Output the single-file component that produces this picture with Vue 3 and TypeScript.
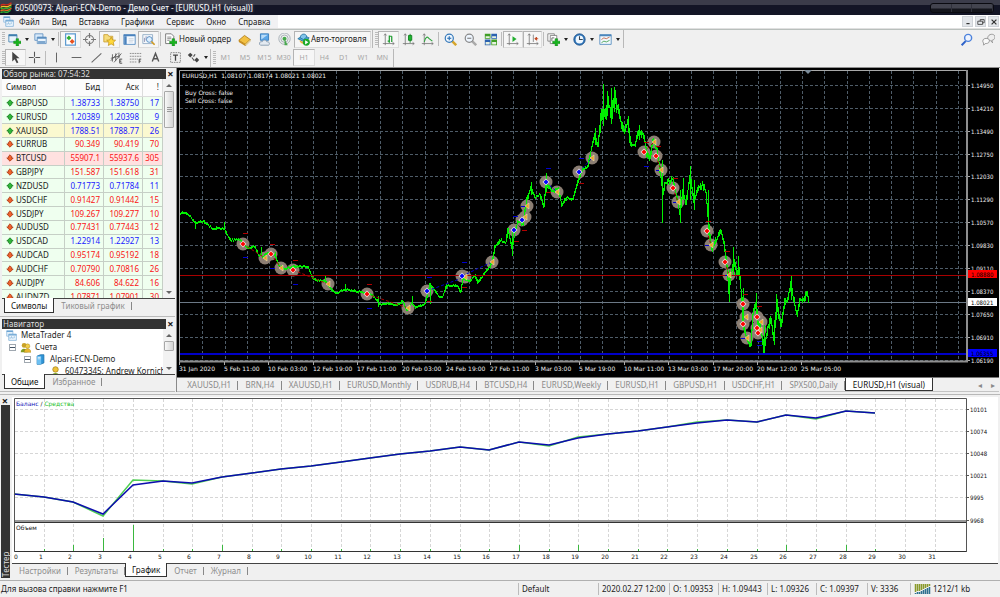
<script setup lang="ts">
import { ref } from 'vue'

interface Tool { icon: string; label: string; on?: boolean; menu?: boolean }
interface Quote { name: string; bid: string; ask: string; spread: number; up: boolean; tone?: string }
type Point = [number, number]
type Deal = [number, number, 'sell' | 'buy' | 'close']

const menus = ['Файл', 'Вид', 'Вставка', 'Графики', 'Сервис', 'Окно', 'Справка']

const axes = '<path d="M4 1v14M1 13h14M2.500 3 4 1l1.500 2M13 11.500l2 1.500-2 1.500" stroke="#777" fill="none"/>'
const plus = '<path d="M10 7h3v3h3v3h-3v3h-3v-3H7v-3h3z" fill="#17b51c" stroke="#0b7d10" stroke-width=".6"/>'
const lens = (c: string) => `<path d="m10 10 5 5" stroke="${c === '#888' ? '#aaa' : '#d5a52c'}" stroke-width="3"/><circle cx="6.500" cy="6.500" r="5" fill="#eef6ff" stroke="${c}" stroke-width="1.500"/><path d="M4 6.500h5" stroke="${c}" stroke-width="1.500"/>`

const icons: Record<string, string> = {
  newChart: '<path d="M1 2h10v9H1z" fill="#e8f3fb" stroke="#3f7fae"/><path d="M1 3h10" stroke="#3f7fae" stroke-width="2"/>' + plus,
  profiles: '<path d="M1 1h10v8H1z" fill="#d8eafa" stroke="#5c8fc0"/><path d="M4 5h11v8H4z" fill="#eaf4fd" stroke="#5c8fc0"/><path d="M4 6h11M5 11h9" stroke="#5c8fc0" stroke-width="2"/>',
  market: '<path d="M2 1h12v14H2z" fill="#fff" stroke="#5d9bd1" stroke-width="1.500"/><path d="M6 3l3 3-3 3-3-3z" fill="#2fae33"/><path d="M10 7.500l3 3-3 3-3-3z" fill="#e8501c"/>',
  dataWindow: '<circle cx="8" cy="8" r="5" fill="none" stroke="#777" stroke-width="1.300"/><path d="M8 0v6M8 10v6M0 8h6M10 8h6" stroke="#777" stroke-width="1.500"/>',
  navigator: '<path d="M1 2h5l1 2h5v7H1z" fill="#f6dc7b" stroke="#c79a2a"/><path d="m10 5 1.700 3.500 3.800.4-2.800 2.600.8 3.900-3.500-2-3.500 2 .8-3.900L4.500 8.900l3.800-.4z" fill="#ffd83a" stroke="#b98a10" stroke-width=".8"/>',
  terminal: '<path d="M1 2h14v12H1z" fill="#f4f9ff" stroke="#4a82bd"/><path d="M1 3h14" stroke="#4a82bd" stroke-width="2"/><path d="M3 4v10" stroke="#4a82bd" stroke-width="3"/><path d="M7 7h6M7 9h6M7 11h5" stroke="#c5cfda"/>',
  tester: '<path d="M1 2h12v11H1z" fill="#f4f8fc" stroke="#8aa6c2"/><path d="M3 11V6M5 9V4M7 10V5M9 8V4" stroke="#88a"/><circle cx="9" cy="8" r="3.500" fill="#dff0ff" stroke="#4b84bd"/><path d="m11.500 10.500 4 4" stroke="#cf9b24" stroke-width="2"/>',
  order: '<path d="M2 1h7l3 3v9H2z" fill="#fff" stroke="#666"/><path d="M4 5h5M4 7h5M4 9h3" stroke="#777"/>' + plus,
  book: '<path d="m1 9 7-6 7 5-6 6z" fill="#f3c142" stroke="#a97614"/><path d="m1 9 8 5v2l-8-5z" fill="#c98d1c"/><path d="m9 14 6-6v2l-6 6z" fill="#fff2c4" stroke="#a97614" stroke-width=".5"/>',
  vps: '<path d="M3 1h10v8H3z" fill="#5aa6e8" stroke="#2f75b5"/><path d="M4 2h8l-8 6z" fill="#b9dcf8"/><path d="M2 14c-1-3 2-4 3-3 1-3 5-3 6 0 3-1 4 3 2 4H3z" fill="#e4eaf1" stroke="#7d92a9"/>',
  signal: '<g fill="none" stroke="#9aa5ad"><circle cx="8" cy="7" r="7"/><circle cx="8" cy="7" r="4.500"/></g><circle cx="8" cy="7" r="2.500" fill="#45a84a"/><path d="m8 7 4 8H8z" fill="#49a84e"/>',
  expert: '<path d="M1 7 8 3l7 3-6 5z" fill="#50a8dc" stroke="#23719f"/><path d="M4 6c0-6 8-6 8-1L8 8z" fill="#80c4ea" stroke="#23719f"/><path d="M3 9c1 6 9 5 9 0L8 11z" fill="#e6b33e"/><circle cx="11.500" cy="11.500" r="4.300" fill="#1aaa28"/><path d="m10 9 4 2.500-4 2.500z" fill="#fff"/>',
  bars: axes + '<path d="M9 3v9M7 10h2M9 4h3M12 4v7" stroke="#1b9a2c" stroke-width="1.500" fill="none"/>',
  candles: axes + '<path d="M10 1v11" stroke="#087b18"/><path d="M8 3h4v6H8z" fill="#1fb52f" stroke="#087b18"/>',
  line: axes + '<path d="M4 11c2-7 4-7 6-4l4 3" stroke="#2ba33a" stroke-width="1.300" fill="none"/>',
  zoomIn: lens('#3478b8') + '<path d="M6.500 4v5" stroke="#3478b8" stroke-width="1.500"/>',
  zoomOut: lens('#888'),
  tiles: '<path d="M1 1h7v6H1zM9 8h7v7H9z" fill="#3f9e25"/><path d="M9 1h7v6H9zM1 8h7v7H1z" fill="#2b62b0"/><path d="M2 4h5v2H2zM10 4h5v2h-5zM2 11h5v3H2zM10 11h5v3h-5z" fill="#e7f1e0"/>',
  scroll: axes + '<path d="m8 4 5 3.500L8 11z" fill="#21ad2e"/>',
  shift: axes + '<path d="M9 2v9" stroke="#777"/><path d="M11 7h4M11 7l2-2v4z" stroke="#c3421b" fill="#c3421b"/>',
  indicators: '<path d="M1 1h8v9H1z" fill="#fff" stroke="#777"/><path d="M4 3h8v10H4z" fill="#fff" stroke="#777"/><path d="M6 10V6h3" stroke="#555" fill="none"/>' + plus,
  clock: '<circle cx="8" cy="8" r="7" fill="#2e76bb" stroke="#1c4f88"/><circle cx="8" cy="8" r="4.800" fill="#eef7ff"/><path d="M8 4v4h4" stroke="#345" fill="none" stroke-width="1.300"/>',
  template: '<path d="M1 2h14v12H1z" fill="#f2f8fc" stroke="#4c86bc"/><path d="M1 3h14" stroke="#4c86bc" stroke-width="2"/><path d="m3 8 3-2 3 1 4-2" stroke="#c05a3c" fill="none"/><path d="m3 12 3-2 3 1 4-2" stroke="#379a45" fill="none"/>',
  cursor: '<path d="M4 1v12l3-3 2.500 5 2-1L9 9h4z" fill="#444"/>',
  cross: '<path d="M8 1v6M8 9v6M1 8h6M9 8h6" stroke="#555" stroke-width="1.300"/>',
  vline: '<path d="M8 2v12" stroke="#666" stroke-width="1.300"/>',
  hline: '<path d="M2 8h12" stroke="#666" stroke-width="1.300"/>',
  trend: '<path d="M2 14 14 3" stroke="#666" stroke-width="1.300"/>',
  channel: '<path d="m1 12 8-9M5 14l9-11M3 4v9M7 3v9M11 2v7M1 9l11-3" stroke="#555" fill="none"/><path d="M15 10h-3v5h3M12 12.500h2" stroke="#333" fill="none"/>',
  fibo: '<path d="M1 3h14M1 6.500h14M1 10h10M1 13.500h9" stroke="#777" stroke-dasharray="2 1"/><path d="M15 10h-2.500v5M12.500 12.500h2" stroke="#333" fill="none"/>',
  letter: '<path d="m4 13 4-10 4 10M5.500 9.500h5" stroke="#555" stroke-width="1.700" fill="none"/>',
  label: '<path d="M2 2h12v12H2z" fill="none" stroke="#777" stroke-dasharray="2 1"/><path d="M5 5h6M8 5v7" stroke="#444" stroke-width="1.600"/>',
  arrows: '<path d="m1 5 3-3 3 3-3 3z" fill="#444"/><path d="m9 11 3-3 3 3-3 3z" fill="#444"/><path d="m6 8 3 4M10 4l-2 3" stroke="#555" stroke-width="1.500"/>',
  search: '<path d="m2 15 5-5" stroke="#2d62c9" stroke-width="2.500"/><circle cx="10" cy="6" r="4.300" fill="#eef4ff" stroke="#4e83dc" stroke-width="1.800"/>',
  chat: '<path d="M7 8c-1-8 9-8 9-3 0 3-3 4-4 4l1 3-3-3c-1 0-2 0-3-1z" fill="#eee" stroke="#888"/><path d="M1 10c0-5 9-4 8 0 0 3-4 3-5 3l-2 2v-3c-1 0-1-1-1-2z" fill="#fafafa" stroke="#888"/>',
  app: '<path d="M1 1h9v8H1z" fill="#e6f2fb" stroke="#86b5dc"/><path d="M4 6h11v9H4z" fill="#f4faff" stroke="#6aa3d2"/><path d="M1 2h9M4 7h11" stroke="#6aa3d2" stroke-width="2"/><path d="M6 13v-3M8 12V9M10 13v-3M12 12V9" stroke="#7fb0d8"/>',
  people: '<circle cx="6" cy="5" r="3.500" fill="#c9a227"/><path d="M1 15c0-7 9-7 10 0z" fill="#7f9c20"/><circle cx="11" cy="6" r="3.300" fill="#f2cf4a" stroke="#a07b12" stroke-width=".6"/><path d="M6 15c0-7 10-7 10 0z" fill="#e9b82f" stroke="#a07b12" stroke-width=".6"/>',
  person: '<circle cx="8" cy="5" r="4" fill="#eec23a" stroke="#a07b12"/><path d="M2 16c0-8 12-8 12 0z" fill="#7aa52a"/>',
  server: '<path d="m3 3 5-2h5v12l-5 2H3z" fill="#2f94d6" stroke="#1a6ea8"/><path d="M3 3h6v12H3z" fill="#6dc0f2"/><path d="M4 5h4M4 7h4" stroke="#fff"/>',
}

const standard: Tool[][] = [
  [{ icon: 'newChart', label: 'Новый график', menu: true }, { icon: 'profiles', label: 'Профили', menu: true }],
  [
    { icon: 'market', label: 'Обзор рынка', on: true }, { icon: 'dataWindow', label: 'Окно данных' },
    { icon: 'navigator', label: 'Навигатор', on: true }, { icon: 'terminal', label: 'Терминал' },
    { icon: 'tester', label: 'Тестер стратегий', on: true },
  ],
]
const services: Tool[] = [
  { icon: 'book', label: 'MetaEditor' }, { icon: 'vps', label: 'Хостинг' }, { icon: 'signal', label: 'Сигналы' },
]
const charting: Tool[][] = [
  [{ icon: 'bars', label: 'Бары', on: true }, { icon: 'candles', label: 'Свечи' }, { icon: 'line', label: 'Линия' }],
  [{ icon: 'zoomIn', label: 'Увеличить' }, { icon: 'zoomOut', label: 'Уменьшить' }, { icon: 'tiles', label: 'Окна мозаикой' }],
  [{ icon: 'scroll', label: 'Автопрокрутка', on: true }, { icon: 'shift', label: 'Сдвиг графика', on: true }],
  [
    { icon: 'indicators', label: 'Индикаторы', menu: true }, { icon: 'clock', label: 'Периоды', menu: true },
    { icon: 'template', label: 'Шаблоны', menu: true },
  ],
]
const pointers: Tool[] = [{ icon: 'cursor', label: 'Курсор', on: true }, { icon: 'cross', label: 'Перекрестие' }]
const drawing: Tool[] = [
  { icon: 'vline', label: 'Вертикальная линия' }, { icon: 'hline', label: 'Горизонтальная линия' },
  { icon: 'trend', label: 'Трендовая линия' }, { icon: 'channel', label: 'Канал' }, { icon: 'fibo', label: 'Фибоначчи' },
  { icon: 'letter', label: 'Текст' }, { icon: 'label', label: 'Метка' },
]
const frames = ['M1', 'M5', 'M15', 'M30', 'H1', 'H4', 'D1', 'W1', 'MN']
const frame = ref('H1')

const q = (name: string, bid: string, ask: string, spread: number, up = false, tone = ''): Quote =>
  ({ name, bid, ask, spread, up, tone })
const quotes: Quote[] = [
  q('GBPUSD', '1.38733', '1.38750', 17, true), q('EURUSD', '1.20389', '1.20398', 9, true),
  q('XAUUSD', '1788.51', '1788.77', 26, true, 'yellow'), q('EURRUB', '90.349', '90.419', 70),
  q('BTCUSD', '55907.1', '55937.6', 305, false, 'pink'), q('GBPJPY', '151.587', '151.618', 31),
  q('NZDUSD', '0.71773', '0.71784', 11, true), q('USDCHF', '0.91427', '0.91442', 15),
  q('USDJPY', '109.267', '109.277', 10), q('AUDUSD', '0.77431', '0.77443', 12),
  q('USDCAD', '1.22914', '1.22927', 13, true), q('AUDCAD', '0.95174', '0.95192', 18),
  q('AUDCHF', '0.70790', '0.70816', 26), q('AUDJPY', '84.606', '84.622', 16),
  q('AUDNZD', '1.07871', '1.07901', 30),
]

const chartTabs = ['XAUUSD,H1', 'BRN,H4', 'XAUUSD,H1', 'EURUSD,Monthly', 'USDRUB,H4', 'BTCUSD,H4', 'EURUSD,Weekly', 'EURUSD,H1', 'GBPUSD,H1', 'USDCHF,H1', 'SPX500,Daily', 'EURUSD,H1 (visual)']
const chartTab = ref(11)
const testerTabs = ['Настройки', 'Результаты', 'График', 'Отчет', 'Журнал']
const testerTab = ref('График')
const bar = [
  { text: '2020.02.27 12:00', size: 'time' }, { text: 'O: 1.09353', size: 'cell' }, { text: 'H: 1.09443', size: 'cell' },
  { text: 'L: 1.09326', size: 'cell' }, { text: 'C: 1.09397', size: 'close' }, { text: 'V: 3336', size: 'volume' },
]

// Price chart
const gridX = Array.from({ length: 35 }, (_, i) => Math.round(202.3 + i * 22.22))
const prices = ['1.14950', '1.14210', '1.13490', '1.12750', '1.12030', '1.11290', '1.10570', '1.09830', '1.09110', '1.08370', '1.07650', '1.06910', '1.06190']
  .map((text, i) => ({ text, y: Math.round(84.8 + i * 22.92) }))
const dates = ['31 Jan 2020', '5 Feb 11:00', '10 Feb 03:00', '12 Feb 19:00', '17 Feb 11:00', '20 Feb 03:00', '24 Feb 19:00', '27 Feb 11:00', '3 Mar 03:00', '5 Mar 19:00', '10 Mar 11:00', '13 Mar 03:00', '17 Mar 20:00', '20 Mar 12:00', '25 Mar 05:00']
  .map((text, i) => ({ text, x: Math.round(179.4 + i * 44.43) }))

const trend: Point[] = [
  [180, 214], [183, 212], [190, 216], [195, 223], [203, 221], [212, 228], [224, 228], [230, 240], [240, 239], [247, 248],
  [255, 246], [258, 254], [263, 257], [268, 252], [275, 254], [279, 266], [285, 268], [295, 266], [308, 266], [313, 279],
  [325, 281], [332, 290], [337, 293], [345, 289], [358, 291], [372, 294], [380, 304], [388, 303], [397, 305], [403, 301],
  [407, 311], [412, 302], [415, 307], [425, 304], [430, 284], [435, 290], [439, 297], [443, 296], [447, 285], [457, 285],
  [461, 292], [463, 278], [470, 281], [475, 275], [478, 283], [483, 276], [488, 269], [492, 263], [495, 247], [500, 240],
  [506, 242], [508, 228], [512, 249], [515, 233], [518, 221], [523, 224], [527, 199], [531, 187], [535, 198], [540, 194],
  [544, 207], [546, 182], [552, 191], [558, 188], [562, 205], [567, 198], [573, 199], [577, 185], [580, 175], [583, 169],
  [588, 167], [592, 146], [595, 135], [598, 146], [600, 126], [602, 109], [604, 116], [607, 107], [612, 109], [614, 98],
  [618, 109], [622, 126], [625, 132], [628, 121], [631, 144], [635, 146], [639, 130], [644, 136], [647, 153], [650, 158],
  [653, 139], [657, 150], [660, 169], [663, 194], [665, 183], [670, 181], [673, 178], [677, 198], [680, 214], [683, 191],
  [686, 205], [690, 175], [694, 202], [698, 188], [703, 184], [706, 192], [708, 215], [710, 239], [712, 250], [717, 239],
  [721, 230], [724, 243], [727, 266], [729, 293], [732, 269], [734, 260], [737, 273], [739, 268], [742, 299], [743, 323],
  [747, 339], [751, 346], [753, 315], [756, 303], [758, 323], [762, 335], [764, 349], [768, 328], [771, 319], [774, 340],
  [777, 302], [781, 326], [785, 303], [788, 299], [791, 282], [793, 296], [797, 315], [800, 301], [804, 300], [807, 291], [809, 302],
]
const spikes: [number, number, number][] = [
  [195, 221, 229], [224, 222, 230], [261, 247, 256], [325, 275, 282], [345, 284, 291], [378, 296, 307], [412, 296, 305],
  [430, 283, 304], [512, 230, 256], [531, 182, 195], [546, 173, 193], [595, 128, 145], [603, 84, 126], [607, 91, 116],
  [611, 88, 124], [614, 90, 112], [639, 125, 140], [662, 160, 223], [680, 190, 223], [683, 178, 200], [690, 166, 200],
  [694, 180, 210], [708, 190, 235], [729, 270, 302], [733, 247, 275], [738, 256, 275], [743, 288, 330], [756, 293, 320],
  [764, 325, 354], [774, 320, 345], [776, 294, 320], [791, 275, 300],
]

let seed = 7
const noise = (): number => {
  seed = (seed * 16807) % 2147483647
  return seed / 2147483647
}
function priceAt(x: number): number {
  const i = Math.max(1, trend.findIndex(p => p[0] >= x))
  const [x0, y0] = trend[i - 1]
  const [x1, y1] = trend[i]
  return y0 + (y1 - y0) * (x - x0) / (x1 - x0)
}
const candles: string = (() => {
  let d = ''
  for (let x = 180; x < 809; x++) {
    const range = x < 490 ? 2 : x < 600 ? 3 : x < 620 ? 14 : x < 632 ? 8 : x < 700 ? 5 : 6
    const a = priceAt(x)
    const b = priceAt(x + 1)
    const top = Math.round(Math.min(a, b) - noise() * noise() * range)
    const low = Math.max(top + 2, Math.round(Math.max(a, b) + noise() * noise() * range))
    d += `M${x + 0.5} ${top}V${low}`
  }
  return d + spikes.map(([x, t, l]) => `M${x + 0.5} ${t}V${l}`).join('')
})()

const deals: Deal[] = [
  [243, 244, 'sell'], [265, 258, 'close'], [271, 254, 'sell'], [281, 268, 'close'], [293, 270, 'sell'], [328, 284, 'close'],
  [367, 294, 'sell'], [408, 308, 'close'], [427, 291, 'buy'], [465, 277, 'close'], [462, 276, 'buy'], [492, 262, 'close'],
  [514, 230, 'buy'], [525, 217, 'close'], [522, 220, 'buy'], [527, 206, 'close'], [546, 182, 'buy'], [557, 192, 'close'],
  [579, 172, 'buy'], [592, 158, 'close'], [644, 152, 'sell'], [654, 142, 'close'], [656, 156, 'sell'], [661, 170, 'close'],
  [673, 188, 'sell'], [678, 202, 'close'], [707, 231, 'sell'], [711, 245, 'close'], [725, 262, 'sell'], [729, 275, 'close'],
  [743, 304, 'sell'], [746, 317, 'close'], [743, 324, 'sell'], [747, 338, 'close'], [761, 322, 'close'], [760, 330, 'close'],
  [757, 317, 'sell'], [757, 328, 'sell'], [758, 333, 'sell'],
]
const redTicks: Point[] = [[245, 233], [272, 244], [295, 260], [369, 284], [429, 301], [464, 287], [516, 241], [524, 230], [548, 192], [581, 183], [646, 142], [658, 146], [675, 178], [708, 221], [727, 251], [745, 294], [759, 306]]
const blueTicks: Point[] = [[245, 257], [272, 268], [295, 284], [369, 308], [429, 277], [464, 262], [515, 216], [523, 206], [548, 168], [581, 158], [646, 166], [658, 170], [675, 202], [707, 245], [727, 275], [743, 338], [759, 341], [759, 345]]
const links: [Point, Point, string][] = [
  [[243, 244], [265, 258], '#a00'], [[271, 254], [281, 268], '#a00'], [[293, 270], [328, 284], '#a00'], [[367, 294], [408, 308], '#a00'],
  [[427, 291], [465, 277], '#00c'], [[462, 276], [492, 262], '#00c'], [[546, 182], [557, 192], '#00c'], [[579, 172], [592, 158], '#00c'],
  [[644, 152], [654, 142], '#a00'], [[656, 156], [661, 170], '#a00'], [[673, 188], [678, 202], '#a00'], [[707, 231], [711, 245], '#a00'],
  [[725, 262], [729, 275], '#a00'],
]

// Balance chart
const step = (i: number): number => Math.round(14 + i * 29.7)
const balance = [494, 497, 502, 514, 485, 481, 483, 477, 473, 469, 466, 462, 458, 454, 451, 447, 450, 442, 445, 438, 434, 431, 427, 423, 420, 422, 415, 418, 411, 413]
const equity = balance.map((y, i) => ({ 3: 516, 4: 480, 6: 484, 18: 446, 19: 437, 20: 434, 23: 422, 27: 419 } as Record<number, number>)[i] ?? y)
const toPoints = (ys: number[]): string => ys.map((y, i) => `${step(i)},${y}`).join(' ')
const tall: Record<number, number> = { 0: 0, 2: 6, 3: 13, 4: 26, 7: 6, 17: 6, 19: 6, 26: 6, 28: 6 }
const volumes = balance.map((_, i) => tall[i] ?? 2)
const levels = ['10101', '10074', '10048', '10021', '9995', '9968'].map((text, i) => ({ text, y: Math.round(409 + i * 22.1) }))
</script>

<template>
  <div class="app">
    <header class="title">
      <svg class="logo" viewBox="0 0 12 12" aria-hidden="true">
        <g fill="none" stroke-width="1.5">
          <path d="M0 4c3-3 5 0 8-1l4-2" stroke="#d02a1c" /><path d="M0 6c3-3 5 0 8-1l4-2" stroke="#f0c02c" />
          <path d="M0 8c3-3 5 0 8-1l4-2" stroke="#2fae33" /><path d="M0 10c3-3 5 0 8-1l4-2" stroke="#e06a20" />
          <path d="M0 12c3-3 5 0 8-1l3-2" stroke="#2fae33" />
        </g>
      </svg>
      <h1>60500973: Alpari-ECN-Demo - Демо Счет - [EURUSD,H1 (visual)]</h1>
      <div class="caption"><button v-for="l in ['Свернуть', 'Развернуть', 'Закрыть']" :key="l" type="button" :aria-label="l" /></div>
    </header>

    <nav class="menu">
      <svg class="menu-icon" viewBox="0 0 16 16" v-html="icons.app" />
      <button v-for="m in menus" :key="m" type="button">{{ m }}</button>
      <span class="fill" />
      <div class="mdi">
        <button type="button" aria-label="Свернуть график"><svg viewBox="0 0 10 10"><path d="M3 7h4" stroke="#333" stroke-width="1.5" /></svg></button>
        <button type="button" aria-label="Восстановить график"><svg viewBox="0 0 10 10"><path d="M4 4V2h5v4H7M1 4h6v4H1z" fill="none" stroke="#333" /></svg></button>
        <button type="button" aria-label="Закрыть график"><svg viewBox="0 0 10 10"><path d="m2 2 6 6M8 2 2 8" stroke="#333" stroke-width="1.5" /></svg></button>
      </div>
    </nav>

    <div class="toolbars">
      <div class="bar">
        <i class="grip" />
        <template v-for="(g, n) in standard" :key="n">
          <div class="group" :class="n ? 'five' : 'pair'">
            <button v-for="t in g" :key="t.icon" type="button" :class="{ on: t.on }" :aria-label="t.label">
              <svg viewBox="0 0 16 16" v-html="icons[t.icon]" /><i v-if="t.menu" class="caret" />
            </button>
          </div>
          <i class="sep" />
        </template>
        <button type="button" class="wide"><svg viewBox="0 0 16 16" v-html="icons.order" />Новый ордер</button>
        <div class="group three">
          <button v-for="t in services" :key="t.icon" type="button" :aria-label="t.label"><svg viewBox="0 0 16 16" v-html="icons[t.icon]" /></button>
        </div>
        <button type="button" class="wide auto on"><svg viewBox="0 0 16 16" v-html="icons.expert" />Авто-торговля</button>
        <i class="edge" /><i class="grip" />
        <template v-for="(g, n) in charting" :key="n">
          <i v-if="n" class="sep" />
          <div class="group" :class="['lines', 'three', 'two', 'drops'][n]">
            <button v-for="t in g" :key="t.icon" type="button" :class="{ on: t.on }" :aria-label="t.label">
              <svg viewBox="0 0 16 16" v-html="icons[t.icon]" /><i v-if="t.menu" class="caret" />
            </button>
          </div>
        </template>
        <i class="edge" />
        <span class="fill" />
        <div class="group help">
          <button type="button" aria-label="Поиск"><svg viewBox="0 0 16 16" v-html="icons.search" /></button>
          <button type="button" aria-label="Чат"><svg viewBox="0 0 16 16" v-html="icons.chat" /></button>
        </div>
      </div>
      <div class="bar second">
        <i class="grip" />
        <div class="group two">
          <button v-for="t in pointers" :key="t.icon" type="button" :class="{ on: t.on }" :aria-label="t.label"><svg viewBox="0 0 16 16" v-html="icons[t.icon]" /></button>
        </div>
        <i class="sep" />
        <div class="group seven">
          <button v-for="t in drawing" :key="t.icon" type="button" :aria-label="t.label"><svg viewBox="0 0 16 16" v-html="icons[t.icon]" /></button>
        </div>
        <div class="group one"><button type="button" aria-label="Стрелки"><svg viewBox="0 0 16 16" v-html="icons.arrows" /><i class="caret" /></button></div>
        <i class="edge" /><i class="grip" />
        <div class="group frames">
          <button v-for="f in frames" :key="f" type="button" :class="{ on: f === frame }" @click="frame = f">{{ f }}</button>
        </div>
        <i class="edge" />
      </div>
    </div>

    <main class="work">
      <aside class="left">
        <section class="panel">
          <div class="head"><h2>Обзор рынка: 07:54:32</h2><button type="button" aria-label="Закрыть обзор рынка">×</button></div>
          <div class="scroller quotes">
            <div class="view">
              <table>
                <thead><tr><th class="sym">Символ</th><th>Бид</th><th>Аск</th><th class="spr">!</th></tr></thead>
                <tbody>
                  <tr v-for="r in quotes" :key="r.name" :class="[r.up ? 'up' : 'down', r.tone]">
                    <td class="sym">
                      <svg viewBox="0 0 10 10"><path v-if="r.up" d="M5 1l4 4H7v2L5 9 3 7V5H1z" fill="#2fb83a" stroke="#147a1d" /><path v-else d="M5 9 1 5h2V3l2-2 2 2v2h2z" fill="#f0622c" stroke="#a83410" /></svg>{{ r.name }}
                    </td>
                    <td>{{ r.bid }}</td><td>{{ r.ask }}</td><td>{{ r.spread }}</td>
                  </tr>
                </tbody>
              </table>
            </div>
            <div class="track"><i class="tri upward" /><span class="thumb" /><i class="tri" /></div>
          </div>
          <div class="tabs"><button type="button" class="active">Символы</button><button type="button">Тиковый график</button></div>
        </section>

        <section class="panel nav">
          <div class="head"><h2>Навигатор</h2><button type="button" aria-label="Закрыть навигатор">×</button></div>
          <div class="scroller tree">
            <ul class="view">
              <li class="l0"><svg viewBox="0 0 16 16" v-html="icons.app" />MetaTrader 4</li>
              <li class="l1"><i class="fold" /><svg viewBox="0 0 16 16" v-html="icons.people" />Счета</li>
              <li class="l2"><i class="fold" /><svg viewBox="0 0 16 16" v-html="icons.server" />Alpari-ECN-Demo</li>
              <li class="l3"><svg viewBox="0 0 16 16" v-html="icons.person" />60473345: Andrew Kornich</li>
            </ul>
            <div class="track small"><i class="tri upward" /><span class="thumb" /><i class="tri" /></div>
          </div>
          <div class="tabs"><button type="button" class="active">Общие</button><button type="button">Избранное</button></div>
        </section>
      </aside>

      <section class="charts">
        <svg class="price" viewBox="177 68 822 309" role="img" aria-label="EURUSD,H1">
          <rect x="177" y="68" width="822" height="309" fill="#000" />
          <g stroke="#4e5c68" stroke-dasharray="3 2" shape-rendering="crispEdges">
            <line v-for="x in gridX" :key="x" :x1="x + 0.5" :x2="x + 0.5" y1="71" y2="361" />
            <line v-for="p in prices" :key="p.y" x1="180" x2="966" :y1="p.y + 0.5" :y2="p.y + 0.5" />
          </g>
          <path d="M180 302.5h787" stroke="#6c7986" />
          <circle v-for="(d, i) in deals" :key="'c' + i" :cx="d[0]" :cy="d[1]" r="6.500" fill="#8b7e73" />
          <path :d="candles" stroke="#00f000" shape-rendering="crispEdges" />
          <path d="M180 275.500h787" stroke="#a80000" />
          <path d="M180 354h787" stroke="#0000c8" stroke-width="2" />
          <line v-for="(l, i) in links" :key="'l' + i" :x1="l[0][0]" :y1="l[0][1]" :x2="l[1][0]" :y2="l[1][1]" :stroke="l[2]" stroke-dasharray="3 2" />
          <path v-for="(t, i) in redTicks" :key="'r' + i" :d="`M${t[0] - 2} ${t[1] + 0.5}h5`" stroke="#b00000" />
          <path v-for="(t, i) in blueTicks" :key="'b' + i" :d="`M${t[0] - 2} ${t[1] + 0.5}h5`" stroke="#0000d0" />
          <g v-for="(d, i) in deals" :key="'d' + i" :transform="`translate(${d[0]} ${d[1]})`">
            <path v-if="d[2] === 'close'" d="M2-3v6l-4-3z" fill="#f0a020" stroke="#e8d8a8" stroke-width=".7" />
            <path v-else d="M0-3.500 3.500 0 0 3.500-3.500 0z" fill="#f0e6e0" />
            <path v-if="d[2] !== 'close'" d="M0-2.500 2.500 0 0 2.500-2.500 0z" :fill="d[2] === 'sell' ? '#f00' : '#00f'" />
          </g>
          <path d="M179.500 361V70.500H967" fill="none" stroke="#a8a8a8" />
          <path d="M967 70v292M179 361.500h789" fill="none" stroke="#8f8f8f" stroke-width="2" />
          <path d="M804 70h8l-4 4z" fill="#7b8b99" />
          <path v-for="d in dates" :key="d.x" :d="`M${d.x + 0.5} 362v3`" stroke="#aaa" />
          <path v-for="p in prices" :key="'t' + p.y" :d="`M968 ${p.y + 0.5}h2`" stroke="#aaa" />
          <g class="axis" fill="#f0f0f0">
            <text v-for="p in prices" :key="p.text" x="971" :y="p.y + 3">{{ p.text }}</text>
          </g>
          <g class="axis note" fill="#f0f0f0">
            <text v-for="d in dates" :key="d.text" :x="d.x" y="371">{{ d.text }}</text>
            <text x="182" y="78">EURUSD,H1&nbsp; 1.08107 1.08174 1.08021 1.08021</text>
            <text x="185" y="95">Buy Cross: false</text>
            <text x="185" y="103">Sell Cross: false</text>
          </g>
          <rect x="968" y="270" width="29" height="8" fill="#f00" /><rect x="968" y="298" width="29" height="8" fill="#fff" /><rect x="968" y="349" width="29" height="8" fill="#00f" />
          <g class="axis"><text x="971" y="277">1.08880</text><text x="971" y="305">1.08021</text><text x="971" y="356">1.06355</text></g>
        </svg>
        <div class="chart-tabs">
          <div class="strip">
            <button v-for="(t, i) in chartTabs" :key="i" type="button" :class="{ active: i === chartTab }" @click="chartTab = i">{{ t }}</button>
          </div>
          <span class="fill" />
          <button type="button" class="step" aria-label="Назад">◂</button><button type="button" class="step" aria-label="Вперед">▸</button>
        </div>
      </section>
    </main>

    <section class="tester">
      <div class="spine"><button type="button" aria-label="Закрыть тестер">×</button><h2>Тестер</h2></div>
      <div class="body">
        <svg class="result" viewBox="12 397 986 166" role="img" aria-label="Баланс и средства">
          <rect x="12" y="397" width="986" height="166" fill="#fff" />
          <g stroke="#d6d6d6" stroke-dasharray="3 2" shape-rendering="crispEdges">
            <line v-for="i in 31" :key="i" :x1="step(i) + 0.5" :x2="step(i) + 0.5" y1="399" y2="551" />
            <line v-for="l in levels.slice(0, 5)" :key="l.y" x1="15" x2="966" :y1="l.y + 0.5" :y2="l.y + 0.5" />
          </g>
          <path v-for="(v, i) in volumes" :key="i" :d="`M${step(i) + 0.5} ${551 - v}v${v}`" stroke="#3ab83e" />
          <polyline :points="toPoints(equity)" fill="none" stroke="#4fce52" stroke-width="1.500" />
          <polyline :points="toPoints(balance)" fill="none" stroke="#0c0cae" stroke-width="1.500" />
          <path d="M14 521h953" stroke="#999" stroke-width="2" />
          <path d="M14 522.500h953M14 551.500h953" stroke="#333" />
          <path d="M14.500 552V398.500h952V552" fill="none" stroke="#555" />
          <path v-for="l in levels" :key="'k' + l.y" :d="`M967 ${l.y + 0.5}h2`" stroke="#555" />
          <g class="axis" fill="#111">
            <text v-for="l in levels" :key="l.text" x="970" :y="l.y + 3">{{ l.text }}</text>
          </g>
          <g class="axis note" fill="#111">
            <text x="16" y="559" text-anchor="middle">0</text>
            <text v-for="i in 31" :key="'x' + i" :x="step(i) - 3" y="559" text-anchor="middle">{{ i }}</text>
            <text x="16" y="406"><tspan fill="#1212b8">Баланс</tspan> / <tspan fill="#25c02a">Средства</tspan></text>
            <text x="16" y="530">Объем</text>
          </g>
        </svg>
        <div class="tabs low">
          <button v-for="t in testerTabs" :key="t" type="button" :class="{ active: t === testerTab }" @click="testerTab = t">{{ t }}</button>
        </div>
      </div>
    </section>

    <footer class="status">
      <span class="hint">Для вызова справки нажмите F1</span>
      <span class="profile">Default</span>
      <span v-for="b in bar" :key="b.text" :class="b.size">{{ b.text }}</span>
      <span class="net">
        <svg viewBox="0 0 16 10" aria-hidden="true"><path d="M1 0v8M3 0v7M5 0v7M7 0v6M9 0v5M11 0v4M13 0v3M15 0v2" stroke="#8a9a2c" stroke-width="1.5" /><path d="M1 9v1M3 8v2M5 8v2M7 7v3M9 6v4M11 5v5M13 4v6M15 3v7" stroke="#2c6f8f" stroke-width="1.5" /></svg>
        1212/1 kb
      </span>
    </footer>
  </div>
</template>

<style>
body { margin: 0; background: #f0f0f0; }
</style>

<style scoped>
.app { display: flex; flex-direction: column; min-height: 100vh; background: #f0f0f0; color: #1c1c1c; font: 8px/12px "Noto Sans", "Open Sans", sans-serif; overflow: hidden; }
* { box-sizing: border-box; }
button { margin: 0; padding: 0; border: 0; background: none; color: inherit; font: inherit; white-space: nowrap; }
h1, h2, ul { margin: 0; padding: 0; font-size: inherit; font-weight: 400; list-style: none; }
svg { display: block; flex: none; }
.fill { flex: 1; }

.title { display: flex; align-items: center; height: 15px; background: linear-gradient(#3b3c4a 0 5px, #131526 5px); color: #fff; }
.logo { width: 12px; height: 11px; margin-right: 3px; }
.title h1 { flex: 1; text-shadow: 0 0 3px #8a8fa8; }
.caption { display: flex; width: 64px; height: 10px; margin-right: 6px; border: 1px solid #0a0a10; border-radius: 3px; background: linear-gradient(#43444f 0 4px, #14151c 5px); overflow: hidden; }
.caption button { flex: 1; border-right: 1px solid #30313c; }

.menu { display: flex; align-items: center; height: 14px; background: linear-gradient(90deg, #f1f1f3 0 278px, #fff 278px); gap: 12px; border-bottom: 1px solid #e0e0e0; }
.menu-icon { width: 11px; height: 11px; margin: 0 -7px 0 3px; }
.mdi { display: flex; gap: 2px; padding-right: 1px; }
.mdi button { display: grid; place-items: center; width: 11px; height: 11px; background: #e3e6ea; border: 1px solid #cfd3d8; }
.mdi svg { width: 8px; height: 8px; }

.toolbars { border-top: 1px solid #b9bfbc; border-bottom: 1px solid #8f8f8f; background: #f0f0f0; }
.bar { display: flex; align-items: center; height: 18px; }
.second { height: 19px; }
.grip { width: 3px; height: 14px; margin: 0 0 0 2px; background: repeating-linear-gradient(#bbb 0 1px, #f0f0f0 1px 2px); }
.sep { width: 1px; height: 14px; margin: 0 1px; background: #bcbcbc; }
.edge { width: 1px; height: 18px; margin-left: 1px; background: #b8b8b8; }
.group { display: flex; height: 17px; }
.group button { flex: 1; display: flex; align-items: center; justify-content: center; gap: 4px; }
.group svg { width: 13px; height: 13px; }
.on { border: 1px solid #dcdcdc; border-top-color: #b4b4b4; border-left-color: #b4b4b4; background: #f6f6f6; }
.pair { width: 52px; }
.five { width: 99px; }
.three { width: 60px; }
.lines { width: 59px; }
.two { width: 39px; }
.one { width: 24px; }
.seven { width: 138px; }
.drops { width: 77px; }
.frames { width: 176px; color: #a6a6a6; font-size: 7px; }
.help { width: 44px; margin-right: 1px; }
.help button { flex: 1; }
.caret { width: 0; border: 2px solid transparent; border-top: 3px solid #222; border-bottom: 0; }
.wide { display: flex; align-items: center; gap: 2px; width: 72px; height: 17px; padding-left: 2px; overflow: hidden; }
.wide svg { width: 13px; height: 13px; }
.auto { width: 77px; gap: 1px; }

.work { display: grid; grid-template-columns: 177px minmax(0, 1fr); padding-right: 1px; }
.left { border-right: 1px solid #8a8a8a; padding-right: 1px; }
.panel { border-bottom: 1px solid #bbb; height: 249px; }
.nav { height: 75px; padding-top: 1px; }
.head { display: flex; align-items: center; margin-left: 2px; height: 11px; }
.head h2 { flex: 1; height: 10px; padding-left: 1px; line-height: 10px; background: #333; color: #ddd; }
.head button { width: 9px; line-height: 10px; font-size: 11px; font-weight: 700; }
.scroller { display: flex; margin-left: 2px; background: #fff; border-bottom: 1px solid #444; overflow: hidden; }
.view { flex: 1; min-width: 0; overflow: hidden; }
.quotes { height: 220px; }
.quotes .view { height: 219px; }
table { width: 100%; height: 225px; border-collapse: collapse; table-layout: fixed; }
th, td { padding: 0 3px 0 0; height: 13px; line-height: 12px; text-align: right; font-weight: 400; border: 0 solid #c6cfc6; border-width: 0 1px 1px 0; white-space: nowrap; }
th { height: 17px; border-color: #dcdcdc; background: #fcfcfc; }
th:nth-child(2), th:nth-child(3) { width: 39px; }
.spr { width: 20px; }
th.sym, td.sym { text-align: left; padding-left: 4px; }
td.sym { color: #1c1c1c; }
td.sym svg { display: inline-block; width: 8px; height: 8px; margin-right: 2px; vertical-align: -1px; }
.up { color: #1a1aff; background: #efffef; }
.down { color: #fa1414; background: #efffef; }
.yellow { background: #fbf9d0; }
.pink { background: #ffe1e0; }
.track { display: flex; flex-direction: column; align-items: center; width: 12px; padding: 5px 0 4px; background: #f2f2f2; }
.thumb { width: 10px; height: 37px; margin: 4px 0 auto; border: 1px solid #a8a8a8; border-radius: 1px; background: repeating-linear-gradient(#999 0 1px, transparent 1px 2px) center / 5px 5px no-repeat, linear-gradient(90deg, #f8f8f8, #d4d4d4); }
.small .thumb { height: 10px; background: linear-gradient(90deg, #f8f8f8, #d4d4d4); }
.tri { border: 3px solid transparent; border-top-color: #666; border-bottom: 0; }
.upward { border-top: 0; border-bottom: 3px solid #666; }
.tabs { display: flex; height: 14px; padding-left: 4px; }
.tabs button { padding: 0 7px; color: #8d8d8d; }
.tabs button:not(.active)::after { content: ""; float: right; width: 1px; height: 8px; margin: 2px -7px 0 0; background: #888; }
.tabs .active { margin-top: -1px; padding: 1px 6px 0; border: 1px solid #333; border-top: 0; background: #fff; color: #111; }
.tree { height: 46px; }
.tree li { display: flex; align-items: center; gap: 4px; height: 12px; white-space: nowrap; }
.tree li svg { width: 11px; height: 11px; }
.tree .l0 { padding-left: 4px; }
.tree .l1 { padding-left: 7px; }
.tree .l2 { padding-left: 22px; }
.tree .l3 { padding-left: 48px; }
.fold { width: 7px; height: 7px; border: 1px solid #a0a8b0; background: linear-gradient(#fff 2px, #456 2px 3px, #fff 3px); }

.charts { min-width: 0; }
.price, .result { width: 100%; height: auto; }
.axis { font: 6px "DejaVu Sans Condensed", "DejaVu Sans", sans-serif; white-space: pre; }
.note { font-family: "DejaVu Sans", sans-serif; }
.chart-tabs { display: flex; height: 15px; padding-left: 3px; border-top: 1px solid #777; border-bottom: 1px solid #c4c4c4; color: #8a8a8a; }
.strip { display: flex; width: 753px; }
.strip button { flex: 1 0 auto; padding: 0 7px; }
.strip button:not(.active)::after { content: ""; float: right; width: 1px; height: 9px; margin: 2px -7px 0 0; background: #888; }
.strip .active { padding-top: 1px; border: 1px solid #333; border-top: 0; background: #fff; color: #111; }
.step { width: 13px; }

.tester { display: flex; margin-top: 2px; border-top: 1px solid #b8b8b8; border-bottom: 1px solid #b0b0b0; padding: 2px 2px 0 0; }
.spine { display: flex; flex-direction: column; width: 12px; padding-left: 1px; }
.spine button { width: 8px; height: 8px; font-size: 11px; line-height: 6px; font-weight: 700; }
.spine h2 { flex: 1; width: 9px; margin-bottom: 2px; padding-top: 1px; background: #333; color: #ddd; line-height: 9px; writing-mode: vertical-rl; transform: rotate(180deg); }
.body { flex: 1; min-width: 0; }
.low { height: 17px; border-top: 1px solid #444; padding: 0; }
.low button { height: 14px; }

.status { display: flex; align-items: center; flex: 1; min-height: 16px; white-space: nowrap; }
.status span { display: flex; align-items: center; height: 12px; padding-left: 3px; border-left: 1px solid #bbb; }
.status .hint { flex: 1; border: 0; padding-left: 1px; }
.profile { width: 80px; }
.time { width: 71px; }
.cell { width: 49px; }
.close { width: 51px; }
.volume { width: 43px; }
.net { width: 90px; gap: 2px; }
.net svg { width: 17px; height: 10px; }
</style>
